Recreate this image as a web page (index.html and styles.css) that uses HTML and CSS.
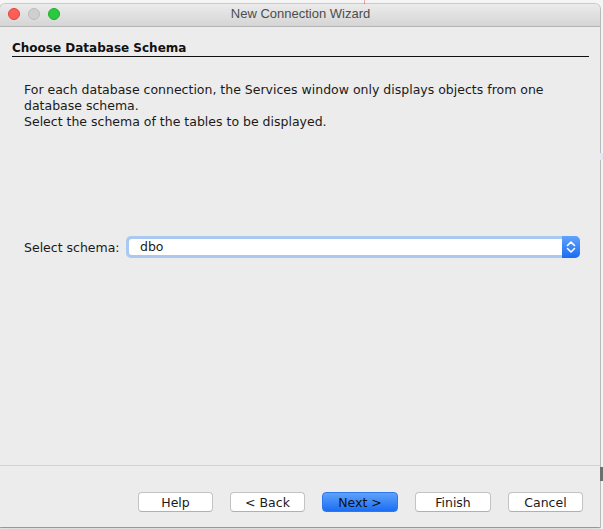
FILE: index.html
```html
<!DOCTYPE html>
<html>
<head>
<meta charset="utf-8">
<title>New Connection Wizard</title>
<link rel="stylesheet" href="styles.css">
</head>
<body>
<div class="desk-top"><span class="desk-line"></span></div>
<div class="screen">
  <div class="window">
    <div class="titlebar">
      <div class="lights">
        <span class="light red"></span>
        <span class="light gray"></span>
        <span class="light green"></span>
      </div>
      <div class="title">New Connection Wizard</div>
    </div>
    <div class="content">
      <div class="head">Choose Database Schema</div>
      <div class="desc">
        <span class="line">For each database connection, the Services window only displays objects from one</span>
        <span class="line">database schema.</span>
        <span class="line">Select the schema of the tables to be displayed.</span>
      </div>
      <div class="schema-row">
        <span class="schema-label">Select schema:</span>
        <div class="combo">
          <div class="combo-field">dbo</div>
          <div class="combo-btn">
            <svg width="18" height="22" viewBox="0 0 18 22">
              <path d="M5.5 9.5 L9 6 L12.5 9.5" fill="none" stroke="#fff" stroke-width="1.6" stroke-linecap="round" stroke-linejoin="round"/>
              <path d="M5.5 12.5 L9 16 L12.5 12.5" fill="none" stroke="#fff" stroke-width="1.6" stroke-linecap="round" stroke-linejoin="round"/>
            </svg>
          </div>
        </div>
      </div>
    </div>
    <div class="footer">
      <button class="btn w75">Help</button>
      <button class="btn w75">&lt; Back</button>
      <button class="btn btn-primary w76">Next &gt;</button>
      <button class="btn w76">Finish</button>
      <button class="btn w75">Cancel</button>
    </div>
  </div>
  <div class="desk-right">
    <span class="dr-blue"></span>
    <span class="dr-dark"></span>
  </div>
</div>
</body>
</html>
```

FILE: styles.css
```css
* { box-sizing: border-box; }
html, body { margin: 0; padding: 0; }
body {
  width: 603px;
  height: 529px;
  overflow: hidden;
  background: #f5f5f5;
  font-family: "DejaVu Sans", "Liberation Sans", sans-serif;
  font-size: 12.5px;
  color: #1a1a1a;
}
.desk-top {
  height: 4px;
  padding-left: 364px;
  display: flex;
}
.desk-line {
  width: 1px;
  height: 4px;
  background: #f2a4a4;
}
.screen {
  display: flex;
  height: 525px;
}
.window {
  width: 600px;
  height: 523px;
  background: #ececec;
  border-radius: 5px 5px 0 0;
  box-shadow: 0 0 0 1px rgba(0,0,0,0.16), 0 1px 2px rgba(0,0,0,0.35);
  display: flex;
  flex-direction: column;
  overflow: hidden;
}
.titlebar {
  height: 23px;
  flex: none;
  background: linear-gradient(#ebebeb, #d5d5d5);
  border-bottom: 1px solid #b4b4b4;
  display: grid;
  grid-template-areas: "a";
  align-items: center;
}
.lights {
  grid-area: a;
  display: flex;
  gap: 8px;
  padding-left: 8px;
  padding-bottom: 2px;
  justify-self: start;
}
.light {
  width: 12px;
  height: 12px;
  border-radius: 50%;
}
.red { background: #fc5f57; border: 1px solid #e0443e; }
.gray { background: #cfcfcf; border: 1px solid #bcbcbc; }
.green { background: #2ac940; border: 1px solid #1dac2c; }
.title {
  grid-area: a;
  justify-self: center;
  font-family: "Liberation Sans", Arial, sans-serif;
  font-size: 13px;
  color: #4d4d4d;
  padding-bottom: 3px;
  padding-left: 1px;
}
.content {
  flex: 1;
  padding: 0 11px 0 12px;
  display: flex;
  flex-direction: column;
}
.head {
  margin-top: 14px;
  font-weight: bold;
  font-size: 12px;
  line-height: 15px;
  padding-bottom: 0;
  border-bottom: 1px solid #111;
  color: #111;
}
.desc {
  margin-top: 25px;
  padding-left: 12px;
  display: flex;
  flex-direction: column;
  line-height: 16px;
}
.line { white-space: nowrap; }
.schema-row {
  margin-top: 106px;
  padding-left: 12px;
  display: flex;
  align-items: center;
}
.schema-label {
  width: 102px;
  flex: none;
}
.combo {
  width: 454px;
  height: 22px;
  border-radius: 5px;
  background: #a9c9f3;
  display: flex;
}
.combo-field {
  flex: 1;
  margin: 3px 0 3px 3px;
  background: #fff;
  border-radius: 3px 0 0 3px;
  padding-left: 11px;
  line-height: 16px;
}
.combo-btn {
  width: 18px;
  flex: none;
  border-radius: 0 5px 5px 0;
  background: linear-gradient(#62a3fa, #1a6cf4);
  display: flex;
}
.footer {
  height: 62px;
  flex: none;
  border-top: 1px solid #d2d2d2;
  display: flex;
  justify-content: flex-end;
  align-items: flex-start;
  gap: 17px;
  padding-top: 26px;
  padding-right: 17px;
}
.btn {
  height: 20px;
  border: 1px solid #c3c3c3;
  border-bottom-color: #b0b0b0;
  border-radius: 4px;
  background: #fff;
  font-family: "DejaVu Sans", "Liberation Sans", sans-serif;
  font-size: 12.5px;
  color: #1a1a1a;
  padding: 0;
  line-height: 17px;
}
.w75 { width: 75px; }
.w76 { width: 76px; }
.btn-primary {
  background: linear-gradient(#5ea2fa, #1b6ef4);
  border-color: #2d78f0;
  color: #111;
}
.desk-right {
  flex: 1;
  display: flex;
  flex-direction: column;
}
.dr-blue {
  margin-top: 149px;
  height: 7px;
  background: #e4e7ee;
}
.dr-dark {
  margin-top: 307px;
  height: 14px;
  background: #6e6e6e;
}
```
